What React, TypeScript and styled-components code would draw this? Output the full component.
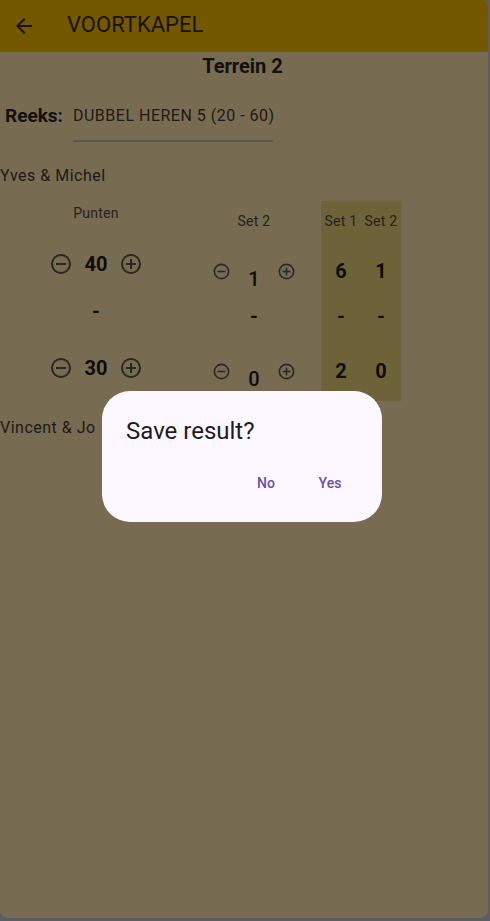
import React from "react";
import styled, { createGlobalStyle } from "styled-components";

const GlobalStyle = createGlobalStyle`
  html, body { margin: 0; padding: 0; background: #5c5c64; }
  body { font-family: Roboto, "Noto Sans", "Liberation Sans", sans-serif; }
  * { box-sizing: border-box; }
`;

const Screen = styled.div`
  position: relative;
  width: 488px;
  height: 918px;
  background: #776b52;
  border-radius: 0 6px 8px 8px;
  overflow: hidden;
  display: flex;
  flex-direction: column;
`;

const AppBar = styled.header`
  height: 52px;
  background: #745800;
  display: flex;
  align-items: center;
  padding-left: 12px;
  flex-shrink: 0;
`;

const BackButton = styled.span`
  width: 24px;
  height: 24px;
  display: flex;
  color: #18140a;
`;

const Title = styled.h1`
  margin: 0 0 3px 31px;
  font-size: 22px;
  font-weight: 400;
  line-height: 28px;
  color: #17130a;
`;

const CourtTitle = styled.div`
  text-align: center;
  font-size: 20px;
  font-weight: 700;
  line-height: 28px;
  color: #12110e;
  padding-right: 3px;
`;

const SeriesRow = styled.div`
  display: flex;
  align-items: flex-start;
  gap: 10px;
  margin-top: 24px;
  padding-left: 5px;
`;

const SeriesLabel = styled.span`
  font-size: 19px;
  font-weight: 700;
  line-height: 24px;
  color: #12110e;
`;

const Dropdown = styled.div`
  width: 200px;
  font-size: 16px;
  line-height: 24px;
  letter-spacing: 0.5px;
  color: #1d1a14;
  padding-bottom: 12px;
  border-bottom: 2px solid #5d5950;
  white-space: nowrap;
`;

const TeamName = styled.div<{ $mt: number }>`
  margin-top: ${(p) => p.$mt}px;
  font-size: 16px;
  line-height: 24px;
  letter-spacing: 0.5px;
  color: #1d1a14;
`;

const ScoreArea = styled.div`
  display: flex;
  align-items: flex-start;
  margin-top: 13px;
  padding-left: 36px;
`;

const ScoreColumn = styled.div<{ $width: number; $ml?: number; $pt: number; $pb?: number; $shade?: boolean }>`
  width: ${(p) => p.$width}px;
  margin-left: ${(p) => p.$ml ?? 0}px;
  padding-top: ${(p) => p.$pt}px;
  padding-bottom: ${(p) => p.$pb ?? 0}px;
  background: ${(p) => (p.$shade ? "#6e6239" : "transparent")};
  display: flex;
  flex-direction: column;
`;

const LabelRow = styled.div`
  display: flex;
  justify-content: center;
  height: 20px;
  align-items: center;
`;

const Label = styled.span<{ $w?: number }>`
  width: ${(p) => (p.$w ? `${p.$w}px` : "auto")};
  text-align: center;
  font-size: 14px;
  letter-spacing: 0.25px;
  color: #25221b;
`;

const ValueRow = styled.div<{ $mt: number }>`
  margin-top: ${(p) => p.$mt}px;
  height: 40px;
  display: flex;
  justify-content: center;
  align-items: center;
`;

const Value = styled.span<{ $w: number; $low?: boolean; $weight?: number }>`
  width: ${(p) => p.$w}px;
  text-align: center;
  font-size: 20px;
  font-weight: ${(p) => p.$weight ?? 700};
  line-height: 24px;
  color: #0e0d0a;
  align-self: ${(p) => (p.$low ? "flex-end" : "center")};
`;

const IconBtn = styled.span<{ $size: number }>`
  width: ${(p) => p.$size}px;
  height: ${(p) => p.$size}px;
  display: flex;
  color: #2a2823;
`;

const Scrim = styled.div`
  position: absolute;
  inset: 0;
  display: flex;
  align-items: center;
  justify-content: center;
  padding: 0 4px 0 0;
`;

const Dialog = styled.div`
  width: 280px;
  background: #fdf7ff;
  border-radius: 28px;
  padding: 24px 20px 19px 24px;
  display: flex;
  flex-direction: column;
  gap: 16px;
  transform: translateY(-3px);
`;

const DialogTitle = styled.div`
  font-size: 24px;
  line-height: 32px;
  color: #1d1b20;
`;

const Actions = styled.div`
  display: flex;
  justify-content: flex-end;
`;

const TextButton = styled.button`
  min-width: 64px;
  height: 40px;
  padding: 0 12px;
  border: none;
  background: transparent;
  font-family: inherit;
  font-size: 14px;
  font-weight: 500;
  letter-spacing: 0.1px;
  color: #6750a4;
  border-radius: 20px;
`;

const ArrowBack = () => (
  <svg width="24" height="24" viewBox="0 0 24 24" fill="currentColor">
    <path d="M20 11H7.83l5.59-5.59L12 4l-8 8 8 8 1.41-1.41L7.83 13H20v-2z" />
  </svg>
);

const MinusCircle = ({ size }: { size: number }) => (
  <svg width={size} height={size} viewBox="0 0 24 24" fill="none" stroke="currentColor">
    <circle cx="12" cy="12" r="9" strokeWidth="2" />
    <line x1="7" y1="12" x2="17" y2="12" strokeWidth="2" />
  </svg>
);

const PlusCircle = ({ size }: { size: number }) => (
  <svg width={size} height={size} viewBox="0 0 24 24" fill="none" stroke="currentColor">
    <circle cx="12" cy="12" r="9" strokeWidth="2" />
    <line x1="7" y1="12" x2="17" y2="12" strokeWidth="2" />
    <line x1="12" y1="7" x2="12" y2="17" strokeWidth="2" />
  </svg>
);

const Stepper = ({ value, size, mt, low, width }: { value: string; size: number; mt: number; low?: boolean; width: number }) => (
  <ValueRow $mt={mt}>
    <IconBtn $size={size}>
      <MinusCircle size={size} />
    </IconBtn>
    <Value $w={width} $low={low} $weight={low ? 500 : 700}>
      {value}
    </Value>
    <IconBtn $size={size}>
      <PlusCircle size={size} />
    </IconBtn>
  </ValueRow>
);

const setResults = [
  { label: "Set 1", a: "6", b: "2" },
  { label: "Set 2", a: "1", b: "0" },
];

export default function App() {
  return (
    <>
      <GlobalStyle />
      <Screen>
        <AppBar>
          <BackButton>
            <ArrowBack />
          </BackButton>
          <Title>VOORTKAPEL</Title>
        </AppBar>
        <CourtTitle>Terrein 2</CourtTitle>
        <SeriesRow>
          <SeriesLabel>Reeks:</SeriesLabel>
          <Dropdown>DUBBEL HEREN 5 (20 - 60)</Dropdown>
        </SeriesRow>
        <TeamName $mt={22}>Yves &amp; Michel</TeamName>
        <ScoreArea>
          <ScoreColumn $width={120} $pt={2}>
            <LabelRow>
              <Label>Punten</Label>
            </LabelRow>
            <Stepper value="40" size={24} mt={21} width={46} />
            <ValueRow $mt={7}>
              <Value $w={30}>-</Value>
            </ValueRow>
            <Stepper value="30" size={24} mt={17} width={46} />
          </ScoreColumn>
          <ScoreColumn $width={120} $ml={38} $pt={10}>
            <LabelRow>
              <Label>Set 2</Label>
            </LabelRow>
            <Stepper value="1" size={19} mt={20} low width={46} />
            <ValueRow $mt={5}>
              <Value $w={30}>-</Value>
            </ValueRow>
            <Stepper value="0" size={19} mt={15} low width={46} />
          </ScoreColumn>
          <ScoreColumn $width={80} $ml={7} $pt={10} $pb={10} $shade>
            <LabelRow>
              {setResults.map((s) => (
                <Label key={s.label} $w={40}>
                  {s.label}
                </Label>
              ))}
            </LabelRow>
            <ValueRow $mt={20}>
              {setResults.map((s) => (
                <Value key={s.label} $w={40}>
                  {s.a}
                </Value>
              ))}
            </ValueRow>
            <ValueRow $mt={5}>
              {setResults.map((s) => (
                <Value key={s.label} $w={40}>
                  -
                </Value>
              ))}
            </ValueRow>
            <ValueRow $mt={15}>
              {setResults.map((s) => (
                <Value key={s.label} $w={40}>
                  {s.b}
                </Value>
              ))}
            </ValueRow>
          </ScoreColumn>
        </ScoreArea>
        <TeamName $mt={15}>Vincent &amp; Jo</TeamName>
        <Scrim>
          <Dialog>
            <DialogTitle>Save result?</DialogTitle>
            <Actions>
              <TextButton>No</TextButton>
              <TextButton>Yes</TextButton>
            </Actions>
          </Dialog>
        </Scrim>
      </Screen>
    </>
  );
}
